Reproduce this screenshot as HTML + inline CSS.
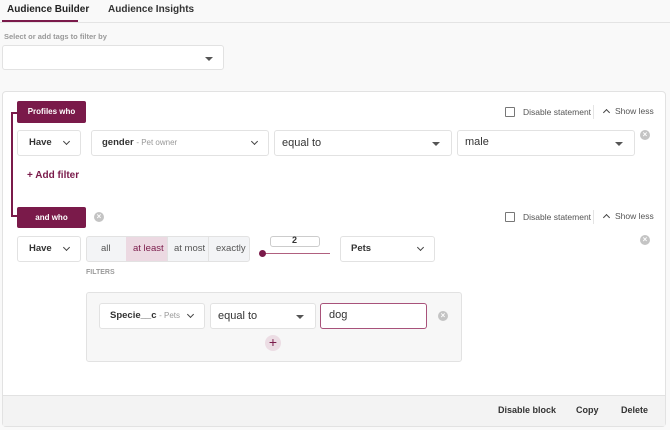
<!DOCTYPE html>
<html><head><style>
*{box-sizing:border-box;margin:0;padding:0}
body{width:670px;height:430px;background:#f9f9f9;font-family:"Liberation Sans",sans-serif;position:relative;overflow:hidden;color:#333}
.a{position:absolute}
.box{position:absolute;background:#fff;border:1px solid #e2e2e2;border-radius:3px}
.t{position:absolute;white-space:nowrap}
.chev{position:absolute;width:5px;height:5px;border-right:1.5px solid #444;border-bottom:1.5px solid #444;transform:rotate(45deg)}
.tri{position:absolute;width:0;height:0;border-left:4px solid transparent;border-right:4px solid transparent;border-top:4px solid #555}
.xc{position:absolute;width:10px;height:10px;border-radius:50%;background:#c4c4c4;color:#fff;font-size:8px;line-height:10px;text-align:center;font-weight:bold}
.btn{position:absolute;background:#7a1a4a;color:#fff;font-size:8px;font-weight:bold;text-align:center;border-radius:2px}
.cb{position:absolute;width:10px;height:10px;border:1.5px solid #777;border-radius:1px}
</style></head><body>
<div class="a" style="left:0;top:22px;width:670px;height:1px;background:#e4e4e4"></div>
<div class="t" style="left:7px;top:4px;font-size:10px;font-weight:bold;color:#222">Audience Builder</div>
<div class="a" style="left:2px;top:20px;width:76px;height:2px;background:#7a1a4a"></div>
<div class="t" style="left:108px;top:4px;font-size:10px;font-weight:bold;color:#333">Audience Insights</div>
<div class="t" style="left:4px;top:32px;font-size:7.5px;font-weight:bold;color:#999">Select or add tags to filter by</div>
<div class="box" style="left:2px;top:45px;width:222px;height:25px"></div>
<div class="tri" style="left:205px;top:57px"></div>

<div class="box" style="left:2px;top:91px;width:664px;height:336px;border-radius:4px"></div>
<div class="a" style="left:3px;top:395px;width:662px;height:31px;background:#f3f3f3;border-top:1px solid #e2e2e2"></div>
<div class="t" style="left:498px;top:405px;font-size:9px;font-weight:bold;color:#333">Disable block</div>
<div class="t" style="left:576px;top:405px;font-size:9px;font-weight:bold;color:#333">Copy</div>
<div class="t" style="left:621px;top:405px;font-size:9px;font-weight:bold;color:#333">Delete</div>

<div class="a" style="left:11px;top:112px;width:6px;height:105px;border-left:2px solid #7a1a4a;border-top:2px solid #7a1a4a;border-bottom:2px solid #7a1a4a"></div>
<div class="btn" style="left:17px;top:101px;width:69px;height:22px;line-height:22px">Profiles who</div>
<div class="btn" style="left:17px;top:207px;width:69px;height:21px;line-height:21px">and who</div>
<div class="xc" style="left:94px;top:212px">×</div>

<div class="cb" style="left:505px;top:107px"></div>
<div class="t" style="left:523px;top:107px;font-size:8.5px;color:#555">Disable statement</div>
<div class="a" style="left:593px;top:105px;width:1px;height:14px;background:#e4e4e4"></div>
<div class="chev" style="left:604px;top:110px;transform:rotate(-135deg)"></div>
<div class="t" style="left:615px;top:106px;font-size:8.5px;color:#555">Show less</div>
<div class="cb" style="left:505px;top:212px"></div>
<div class="t" style="left:523px;top:212px;font-size:8.5px;color:#555">Disable statement</div>
<div class="a" style="left:593px;top:210px;width:1px;height:14px;background:#e4e4e4"></div>
<div class="chev" style="left:604px;top:215px;transform:rotate(-135deg)"></div>
<div class="t" style="left:615px;top:211px;font-size:8.5px;color:#555">Show less</div>

<div class="box" style="left:17px;top:130px;width:64px;height:26px"></div>
<div class="t" style="left:29px;top:137px;font-size:9.5px;font-weight:bold">Have</div>
<div class="chev" style="left:64px;top:139px"></div>
<div class="box" style="left:91px;top:130px;width:178px;height:26px"></div>
<div class="t" style="left:102px;top:137px;font-size:9.5px;font-weight:bold">gender <span style="font-weight:normal;color:#999;font-size:8px">- Pet owner</span></div>
<div class="chev" style="left:252px;top:139px"></div>
<div class="box" style="left:274px;top:130px;width:178px;height:26px"></div>
<div class="t" style="left:282px;top:137px;font-size:11px">equal to</div>
<div class="tri" style="left:432px;top:142px"></div>
<div class="box" style="left:457px;top:130px;width:178px;height:26px"></div>
<div class="t" style="left:465px;top:136px;font-size:11px">male</div>
<div class="tri" style="left:615px;top:142px"></div>
<div class="xc" style="left:640px;top:130px">×</div>
<div class="t" style="left:27px;top:170px;font-size:10px;font-weight:bold;color:#7a1a4a">+ Add filter</div>

<div class="box" style="left:17px;top:236px;width:64px;height:26px"></div>
<div class="t" style="left:29px;top:243px;font-size:9.5px;font-weight:bold">Have</div>
<div class="chev" style="left:64px;top:245px"></div>
<div class="box" style="left:86px;top:236px;width:164px;height:26px;background:#f3f4f6"></div>
<div class="a" style="left:126px;top:237px;width:41px;height:24px;background:#ecd9e2"></div>
<div class="a" style="left:167px;top:237px;width:1px;height:24px;background:#e2e2e2"></div>
<div class="a" style="left:208px;top:237px;width:1px;height:24px;background:#e2e2e2"></div>
<div class="t" style="left:101px;top:243px;font-size:9.5px;color:#555">all</div>
<div class="t" style="left:133px;top:243px;font-size:9.5px;color:#7a1a4a">at least</div>
<div class="t" style="left:174px;top:243px;font-size:9.5px;color:#555">at most</div>
<div class="t" style="left:216px;top:243px;font-size:9.5px;color:#555">exactly</div>
<div class="box" style="left:270px;top:236px;width:50px;height:11px;border-color:#ccc"></div>
<div class="t" style="left:292px;top:235px;font-size:9px;font-weight:bold">2</div>
<div class="a" style="left:263px;top:253px;width:67px;height:1px;background:#b0607f"></div>
<div class="a" style="left:259px;top:250px;width:7px;height:7px;border-radius:50%;background:#7a1a4a"></div>
<div class="box" style="left:340px;top:236px;width:95px;height:26px"></div>
<div class="t" style="left:351px;top:243px;font-size:9.5px;font-weight:bold">Pets</div>
<div class="chev" style="left:418px;top:245px"></div>
<div class="xc" style="left:640px;top:235px">×</div>
<div class="t" style="left:86px;top:269px;font-size:7px;font-weight:bold;color:#9a9a9a">FILTERS</div>

<div class="a" style="left:86px;top:292px;width:376px;height:70px;background:#f7f7f7;border:1px solid #e2e2e2;border-radius:3px"></div>
<div class="box" style="left:99px;top:303px;width:106px;height:26px"></div>
<div class="t" style="left:110px;top:310px;font-size:9.5px;font-weight:bold">Specie__c <span style="font-weight:normal;color:#999;font-size:8px">- Pets</span></div>
<div class="chev" style="left:188px;top:312px"></div>
<div class="box" style="left:210px;top:303px;width:106px;height:26px"></div>
<div class="t" style="left:218px;top:310px;font-size:11px">equal to</div>
<div class="tri" style="left:296px;top:315px"></div>
<div class="box" style="left:320px;top:303px;width:107px;height:26px;border-color:#a8527a"></div>
<div class="t" style="left:329px;top:309px;font-size:11px">dog</div>
<div class="xc" style="left:438px;top:311px">×</div>
<div class="a" style="left:265px;top:335px;width:16px;height:16px;border-radius:50%;background:#ecdde4;color:#7a1a4a;font-size:14px;line-height:15px;text-align:center">+</div>
</body></html>
